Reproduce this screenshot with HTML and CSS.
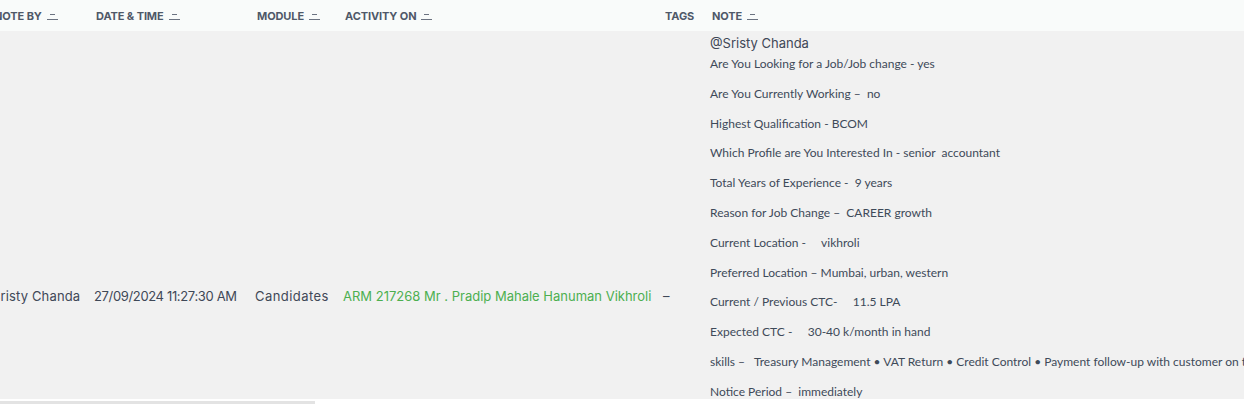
FILE: index.html
```html
<!DOCTYPE html>
<html>
<head>
<meta charset="utf-8">
<link rel="stylesheet" href="styles.css">
</head>
<body>
<div class="viewport">
  <div class="table">
    <div class="row head">
      <div class="th">Note By <span class="sort"><svg width="11" height="7" viewBox="0 0 11 7"><path d="M3 1.5H8M0 6.5H11" stroke="#6b7280" stroke-width="1"/></svg></span></div>
      <div class="th">Date &amp; Time <span class="sort"><svg width="11" height="7" viewBox="0 0 11 7"><path d="M3 1.5H8M0 6.5H11" stroke="#6b7280" stroke-width="1"/></svg></span></div>
      <div class="th">Module <span class="sort"><svg width="11" height="7" viewBox="0 0 11 7"><path d="M3 1.5H8M0 6.5H11" stroke="#6b7280" stroke-width="1"/></svg></span></div>
      <div class="th">Activity On <span class="sort"><svg width="11" height="7" viewBox="0 0 11 7"><path d="M3 1.5H8M0 6.5H11" stroke="#6b7280" stroke-width="1"/></svg></span></div>
      <div class="th">Tags</div>
      <div class="th">Note <span class="sort"><svg width="11" height="7" viewBox="0 0 11 7"><path d="M3 1.5H8M0 6.5H11" stroke="#6b7280" stroke-width="1"/></svg></span></div>
    </div>
    <div class="row body">
      <div class="td name">Sristy Chanda</div>
      <div class="td date">27/09/2024 11:27:30 AM</div>
      <div class="td module">Candidates</div>
      <div class="td link">ARM 217268 Mr . Pradip Mahale Hanuman Vikhroli</div>
      <div class="td">–</div>
      <div class="td note">
        <div class="mention">@Sristy Chanda</div>
        <p>Are You Looking for a Job/Job change - yes</p>
        <p>Are You Currently Working –&nbsp; no</p>
        <p>Highest Qualification - BCOM</p>
        <p>Which Profile are You Interested In - senior&nbsp; accountant</p>
        <p>Total Years of Experience -&nbsp; 9 years</p>
        <p>Reason for Job Change –&nbsp; CAREER growth</p>
        <p>Current Location -&nbsp;&nbsp;&nbsp;&nbsp; vikhroli</p>
        <p>Preferred Location – Mumbai, urban, western</p>
        <p>Current / Previous CTC-&nbsp;&nbsp;&nbsp;&nbsp; 11.5 LPA</p>
        <p>Expected CTC -&nbsp;&nbsp;&nbsp;&nbsp; 30-40 k/month in hand</p>
        <p>skills –&nbsp;&nbsp; Treasury Management • VAT Return • Credit Control • Payment follow-up with customer on time</p>
        <p>Notice Period –&nbsp; immediately</p>
        <p>Interview Availability – Weekdays</p>
        <p>Languages – English, Hindi, Marathi</p>
        <p>Remarks – Shortlisted for next round</p>
      </div>
    </div>
  </div>
</div>
<div class="hscroll"><div class="thumb"></div></div>
</body>
</html>
```
FILE: styles.css
```css
html, body {
  margin: 0;
  padding: 0;
  background: #ffffff;
}
body {
  width: 1244px;
  height: 404px;
  overflow: hidden;
  font-family: "Inter", "Liberation Sans", sans-serif;
}
.viewport {
  width: 1244px;
  height: 399px;
  overflow: hidden;
  background: #f1f1f1;
}
.table {
  margin-left: -16px;
  width: 1500px;
}
.row {
  display: grid;
  grid-template-columns: 102px 161px 88px 320px 47px 800px;
}
.head {
  height: 31px;
  background: #f9fbfa;
  align-items: center;
}
.th {
  padding-left: 10px;
  font-size: 11px;
  font-weight: 700;
  text-transform: uppercase;
  color: #4f5868;
  letter-spacing: -0.1px;
  display: flex;
  align-items: center;
  white-space: nowrap;
}
.sort {
  display: inline-flex;
  margin-left: 5px;
  margin-top: 1px;
}
.body {
  background: #f1f1f1;
  align-items: center;
}
.td {
  padding-left: 8px;
  font-size: 13px;
  color: #3f4857;
  white-space: nowrap;
}
.name {
  letter-spacing: 0.15px;
}
.date {
  letter-spacing: -0.35px;
}
.module {
  letter-spacing: 0.45px;
}
.link {
  color: #4caf50;
}
.note {
  align-self: start;
  padding-top: 4px;
  padding-bottom: 59px;
}
.mention {
  font-size: 13px;
  line-height: 16px;
  color: #3f4857;
  margin-bottom: 5px;
}
.note p {
  margin: 0 0 14.8px 0;
  font-family: "Lato", "Liberation Sans", sans-serif;
  font-size: 12px;
  line-height: 15px;
  color: #3e4a59;
}
.hscroll {
  margin-top: 2px;
  height: 3px;
}
.thumb {
  width: 315px;
  height: 3px;
  background: #e3e3e3;
}
```
